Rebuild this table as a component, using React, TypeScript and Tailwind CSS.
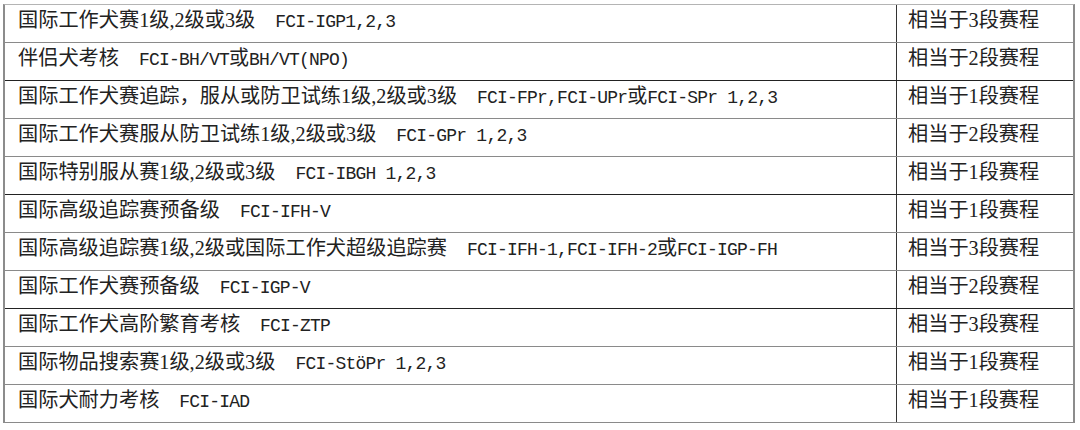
const rows: { name: string; code: string; stage: number; dark?: boolean }[] = [
  { name: "国际工作犬赛1级,2级或3级", code: "FCI-IGP1,2,3", stage: 3 },
  { name: "伴侣犬考核", code: "FCI-BH/VT或BH/VT(NPO)", stage: 2, dark: true },
  { name: "国际工作犬赛追踪，服从或防卫试练1级,2级或3级", code: "FCI-FPr,FCI-UPr或FCI-SPr 1,2,3", stage: 1 },
  { name: "国际工作犬赛服从防卫试练1级,2级或3级", code: "FCI-GPr 1,2,3", stage: 2 },
  { name: "国际特别服从赛1级,2级或3级", code: "FCI-IBGH 1,2,3", stage: 1, dark: true },
  { name: "国际高级追踪赛预备级", code: "FCI-IFH-V", stage: 1 },
  { name: "国际高级追踪赛1级,2级或国际工作犬超级追踪赛", code: "FCI-IFH-1,FCI-IFH-2或FCI-IGP-FH", stage: 3 },
  { name: "国际工作犬赛预备级", code: "FCI-IGP-V", stage: 2, dark: true },
  { name: "国际工作犬高阶繁育考核", code: "FCI-ZTP", stage: 3 },
  { name: "国际物品搜索赛1级,2级或3级", code: "FCI-StöPr 1,2,3", stage: 1 },
  { name: "国际犬耐力考核", code: "FCI-IAD", stage: 1 },
];

// the codes are half-width mono, but "或" stays full-size
const Code = ({ code }: { code: string }) => {
  const parts = code.split("或");
  return (
    <span className="font-['Liberation_Mono','Noto_Sans_CJK_SC',monospace] text-[18px] tracking-[-0.8px]">
      {"  "}
      {parts.map((p, i) => (
        <span key={i}>
          {i > 0 && <span className="text-[20px] tracking-normal">或</span>}
          {p}
        </span>
      ))}
    </span>
  );
};

export default function App() {
  return (
    <div className="h-[430px] w-[1080px] bg-white pl-[3px] pt-[4px] text-[#222]">
      <div className="w-[1072px] border-x-2 border-t border-x-[#8c8c8c] border-t-[#b4b4b4]">
        {rows.map((row, i) => (
          <div
            key={i}
            className={`grid h-[38px] grid-cols-[892px_1fr] border-b ${
              row.dark ? "border-[#222]" : "border-[#8a8a8a]"
            }`}
          >
            <div className="whitespace-pre border-r border-[#333] pl-[13px] pt-[3px] font-['Liberation_Serif','Noto_Sans_CJK_SC',serif] text-[20.2px] leading-[24px]">
              {row.name}
              <Code code={row.code} />
            </div>
            <div className="pl-[11px] pt-[3px] font-['Liberation_Serif','Noto_Sans_CJK_SC',serif] text-[20.2px] leading-[24px]">
              相当于{row.stage}段赛程
            </div>
          </div>
        ))}
      </div>
    </div>
  );
}
